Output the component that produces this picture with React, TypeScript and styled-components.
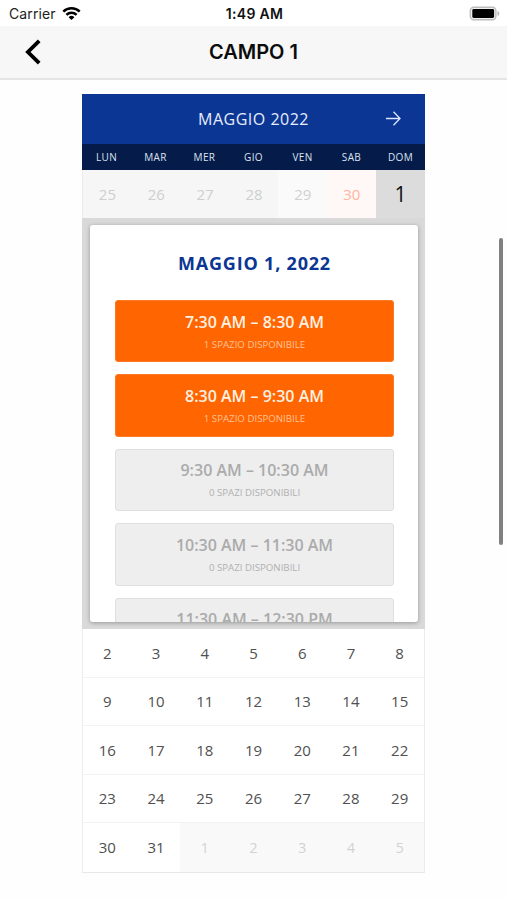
import React from "react";
import styled, { createGlobalStyle } from "styled-components";

const GlobalStyle = createGlobalStyle`
  * { box-sizing: border-box; }
  html, body { margin: 0; background: #fff; }
  body { width: 507px; height: 900px; overflow: hidden; }
`;

const Screen = styled.div`
  position: relative;
  width: 507px;
  height: 900px;
  overflow: hidden;
  background: #fefefe;
  font-family: "Open Sans", "Noto Sans", sans-serif;
`;

const StatusBar = styled.header`
  display: grid;
  grid-template-columns: 1fr auto 1fr;
  align-items: center;
  height: 26px;
  padding: 1px 7px 0 9px;
  background: #fff;
  font: 400 14px/20px Inter, sans-serif;
  color: #222;
`;

const Carrier = styled.div`
  display: flex;
  align-items: center;
  gap: 6px;
  letter-spacing: 0.1px;
`;

const Clock = styled.div`
  font-weight: 600;
  font-size: 14px;
  letter-spacing: 0.35px;
  color: #111;
`;

const Battery = styled.svg`
  justify-self: end;
`;

const NavBar = styled.nav`
  display: grid;
  grid-template-columns: 60px 1fr 60px;
  align-items: center;
  height: 54px;
  background: #f7f7f7;
  border-bottom: 2px solid #e5e5e5;
`;

const BackButton = styled.button`
  display: flex;
  padding: 0 0 0 25px;
  border: 0;
  background: none;
`;

const NavTitle = styled.h1`
  margin: 0;
  text-align: center;
  font: 600 20px/26px Inter, sans-serif;
  letter-spacing: 0;
  color: #0c0c0c;
`;

const Calendar = styled.main`
  width: 343px;
  margin: 14px 0 0 82px;
`;

const MonthBar = styled.div`
  display: grid;
  grid-template-columns: 60px 1fr 60px;
  align-items: center;
  height: 50px;
  background: #0c3693;
  color: #e6edff;
  font-size: 16px;
  text-align: center;
`;

const MonthName = styled.span`
  grid-column: 2;
  letter-spacing: 0.5px;
`;

const NextButton = styled.button`
  display: flex;
  justify-content: center;
  padding: 0 4px 0 0;
  border: 0;
  background: none;
`;

const WeekHeader = styled.div`
  display: grid;
  grid-template-columns: repeat(7, 1fr);
  height: 26px;
  background: #051b49;
  color: #dce3f2;
  font-size: 10px;
  line-height: 26px;
  letter-spacing: 0.35px;
  text-align: center;
`;

type Tone = "normal" | "past" | "fade" | "warm" | "selected" | "next";

const cellBackground: Record<Tone, string> = {
  normal: "#fff",
  past: "#f6f6f6",
  fade: "#fafafa",
  warm: "#fff8f7",
  selected: "#dcdcdc",
  next: "#f9f9f9",
};

const cellColor: Record<Tone, string> = {
  normal: "#505050",
  past: "#cfcfcf",
  fade: "#d0d0d0",
  warm: "#ffb59b",
  selected: "#111",
  next: "#d2d2d2",
};

const Week = styled.div<{ $first?: boolean }>`
  display: grid;
  grid-template-columns: repeat(7, 1fr);
  height: ${(p) => (p.$first ? 48 : 48.5)}px;
  border: solid #ececec;
  border-width: ${(p) => (p.$first ? "0 0 0 1px" : "0 1px")};
`;

const Day = styled.div<{ $tone: Tone; $line?: boolean }>`
  display: flex;
  align-items: center;
  justify-content: center;
  background: ${(p) => cellBackground[p.$tone]};
  color: ${(p) => cellColor[p.$tone]};
  font-size: ${(p) => (p.$tone === "selected" ? 21 : p.$tone === "next" ? 14 : 15)}px;
  border-bottom: ${(p) => (p.$line ? "1px solid #f3f3f3" : "0")};
`;

const Weeks = styled.div`
  border-bottom: 1px solid #e8e8e8;
`;

const DayPanel = styled.section`
  height: 411px;
  padding: 7px 7px 0 8px;
  background: #d9d9d9;
`;

const PanelCard = styled.div`
  height: 397px;
  overflow: hidden;
  padding: 25px 24px 0 25px;
  border-radius: 3px;
  background: #fff;
  box-shadow: 0 1px 4px rgba(0, 0, 0, 0.3);
`;

const PanelTitle = styled.h2`
  margin: 0 0 12px;
  height: 38px;
  text-align: center;
  font-size: 18px;
  font-weight: 700;
  line-height: 26px;
  letter-spacing: 0.8px;
  color: #0c3693;
`;

const SlotList = styled.div`
  display: flex;
  flex-direction: column;
  gap: 12.1px;
`;

const Slot = styled.button<{ $open: boolean }>`
  display: flex;
  flex-direction: column;
  align-items: center;
  justify-content: flex-start;
  flex: none;
  width: 100%;
  height: 62.4px;
  padding: 8.5px 0 0;
  border: 1px solid ${(p) => (p.$open ? "#fb7a26" : "#dfdfdf")};
  border-radius: 3px;
  background: ${(p) => (p.$open ? "#ff6500" : "#eee")};
  color: ${(p) => (p.$open ? "#fff1e2" : "#ababab")};
  font-family: inherit;
`;

const SlotTime = styled.div`
  height: 24px;
  font-size: 16px;
  font-weight: 600;
  line-height: 24px;
`;

const SlotSpaces = styled.div<{ $open: boolean }>`
  font-size: 9.7px;
  line-height: 22px;
  color: ${(p) => (p.$open ? "#ffc198" : "#b0b0b0")};
`;

const ScrollThumb = styled.div`
  position: absolute;
  top: 238px;
  right: 4px;
  width: 4px;
  height: 307px;
  border-radius: 2px;
  background: #808080;
`;

const weekdays = ["LUN", "MAR", "MER", "GIO", "VEN", "SAB", "DOM"];

const firstWeek: { n: number; tone: Tone }[] = [
  { n: 25, tone: "past" },
  { n: 26, tone: "past" },
  { n: 27, tone: "past" },
  { n: 28, tone: "past" },
  { n: 29, tone: "fade" },
  { n: 30, tone: "warm" },
  { n: 1, tone: "selected" },
];

const slots: { time: string; open: boolean; spaces?: string }[] = [
  { time: "7:30 AM – 8:30 AM", open: true, spaces: "1 SPAZIO DISPONIBILE" },
  { time: "8:30 AM – 9:30 AM", open: true, spaces: "1 SPAZIO DISPONIBILE" },
  { time: "9:30 AM – 10:30 AM", open: false, spaces: "0 SPAZI DISPONIBILI" },
  { time: "10:30 AM – 11:30 AM", open: false, spaces: "0 SPAZI DISPONIBILI" },
  { time: "11:30 AM – 12:30 PM", open: false },
];

const weeks = [0, 1, 2, 3, 4].map((w) =>
  [0, 1, 2, 3, 4, 5, 6].map((d) => {
    const n = 2 + w * 7 + d;
    return { n: n > 31 ? n - 31 : n, tone: (n > 31 ? "next" : "normal") as Tone };
  })
);

export default function App() {
  return (
    <Screen>
      <GlobalStyle />
      <StatusBar>
        <Carrier>
          Carrier
          <svg width="19" height="15" viewBox="0 0 19 15">
            <g fill="none" stroke="#000" strokeWidth="2.5">
              <path d="M1.3 5.6a11.6 11.6 0 0 1 16.4 0" />
              <path d="M4.4 8.9a7.2 7.2 0 0 1 10.2 0" />
            </g>
            <path d="M6.6 11.2a4.2 4.2 0 0 1 5.8 0L9.5 14.1z" />
          </svg>
        </Carrier>
        <Clock>1:49 AM</Clock>
        <Battery width="31" height="15" viewBox="0 0 31 15">
          <rect x="1.3" y="1.2" width="25.6" height="12.6" rx="3.5" fill="#f0f0f0" stroke="#bdbdbd" strokeWidth="1.4" />
          <rect x="3.300" y="3" width="21.800" height="9" rx="1.4" />
          <path d="M28.500 5v5c1.100-.4 1.800-1.300 1.800-2.500s-.7-2.100-1.800-2.500z" fill="#b5b5b5" />
        </Battery>
      </StatusBar>
      <NavBar>
        <BackButton aria-label="Indietro">
          <svg width="18" height="26" viewBox="0 0 18 26">
            <path d="M14.200 1.800 2.900 13l11.300 11.200" fill="none" stroke="#000" strokeWidth="3.800" />
          </svg>
        </BackButton>
        <NavTitle>CAMPO 1</NavTitle>
      </NavBar>
      <Calendar>
        <MonthBar>
          <MonthName>MAGGIO 2022</MonthName>
          <NextButton aria-label="Mese successivo">
            <svg width="16" height="16" viewBox="0 0 16 16" fill="none" stroke="#dce6ff" strokeWidth="1.300">
              <path d="M1 7.500h14M8.500.800 15 7.500l-6.500 6.700" />
            </svg>
          </NextButton>
        </MonthBar>
        <WeekHeader>
          {weekdays.map((d) => (
            <span key={d}>{d}</span>
          ))}
        </WeekHeader>
        <Week $first>
          {firstWeek.map((d) => (
            <Day key={d.n} $tone={d.tone}>{d.n}</Day>
          ))}
        </Week>
        <DayPanel>
          <PanelCard>
            <PanelTitle>MAGGIO 1, 2022</PanelTitle>
            <SlotList>
              {slots.map((s) => (
                <Slot key={s.time} $open={s.open}>
                  <SlotTime>{s.time}</SlotTime>
                  {s.spaces && <SlotSpaces $open={s.open}>{s.spaces}</SlotSpaces>}
                </Slot>
              ))}
            </SlotList>
          </PanelCard>
        </DayPanel>
        <Weeks>
          {weeks.map((week, w) => (
            <Week key={w}>
              {week.map((d) => (
                <Day key={d.n} $tone={d.tone} $line={w < 4}>{d.n}</Day>
              ))}
            </Week>
          ))}
        </Weeks>
      </Calendar>
      <ScrollThumb />
    </Screen>
  );
}
